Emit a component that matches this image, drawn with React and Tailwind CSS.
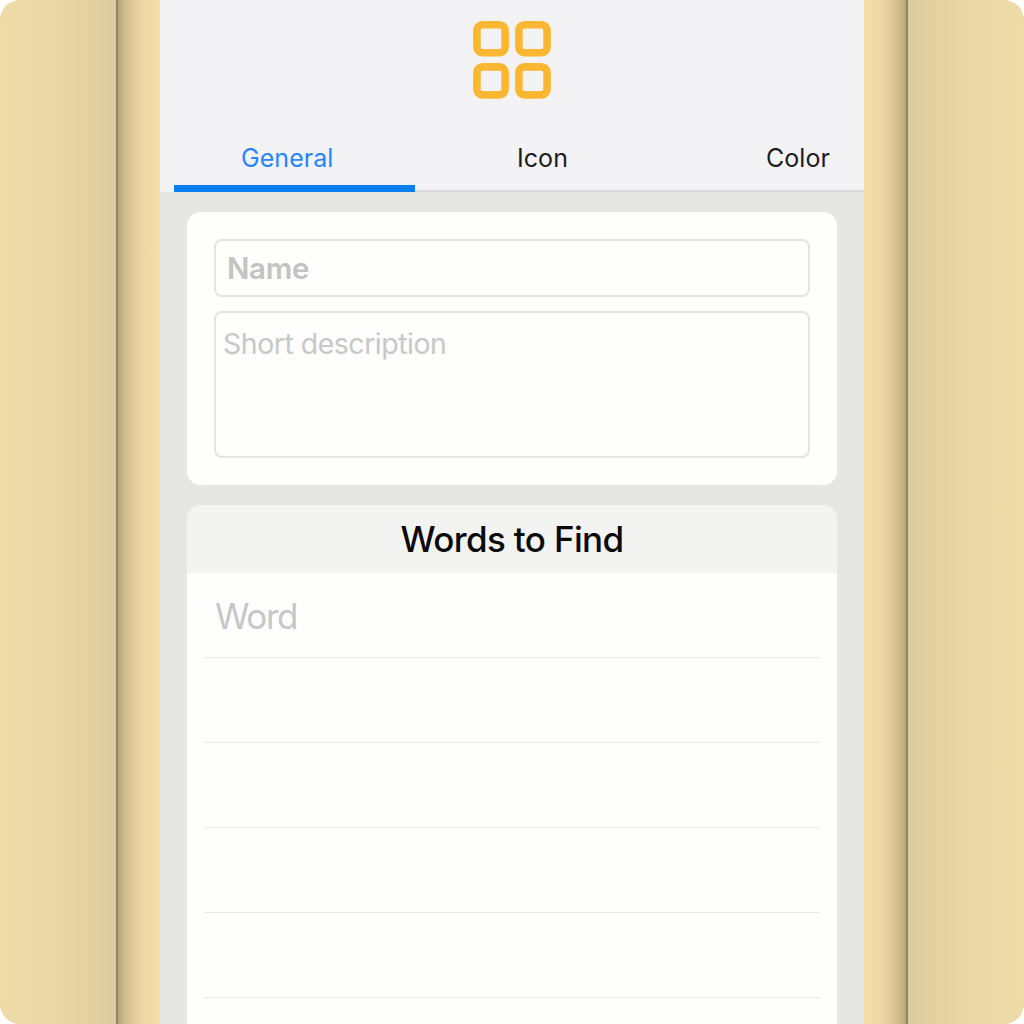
const tabs = [
  { label: "General", active: true },
  { label: "Icon", active: false },
  { label: "Color", active: false },
];

function GridIcon() {
  return (
    <svg className="h-[80px] w-[80px]" viewBox="0 0 80 80" fill="none" stroke="#fcb732" strokeWidth="7.6">
      <rect x="4.9" y="4.8" width="28.2" height="28" rx="5.6" />
      <rect x="46.9" y="4.8" width="28.2" height="28" rx="5.6" />
      <rect x="4.9" y="46.9" width="28.2" height="28" rx="5.6" />
      <rect x="46.9" y="46.9" width="28.2" height="28" rx="5.6" />
    </svg>
  );
}

function Header() {
  return (
    <header className="flex h-[192px] shrink-0 flex-col items-center bg-[#f3f3f6] pt-5">
      <GridIcon />
      <nav className="mt-[30px] flex w-full grow overflow-hidden pl-[14px] text-[25px] leading-[57px] tracking-[0.05px] text-[#1c1c1e]">
        {tabs.map(({ label, active }) => (
          <div
            key={label}
            className={
              active
                ? "h-[62px] w-[241px] shrink-0 border-b-[7px] border-[#067ff0] pl-[67px] text-[#2a84fb]"
                : "h-[62px] w-[255px] shrink-0 border-b-2 border-[#d7d7dc] pl-[102px] last:w-[194px] last:pl-[96px]"
            }
          >
            {label}
          </div>
        ))}
      </nav>
    </header>
  );
}

function DetailsCard() {
  return (
    <section className="flex h-[273px] shrink-0 flex-col gap-[14px] rounded-[14px] bg-[#fefefd] px-[27px] pt-[27px] text-[#c3c3c2]">
      <div className="h-[58px] rounded-[8px] border-2 border-[#e4e4e3] pl-[11px] text-[29.5px] leading-[54px] font-semibold tracking-[-0.3px]">
        Name
      </div>
      <div className="h-[147px] rounded-[8px] border-2 border-[#e4e4e3] pt-[11px] pl-[7px] text-[28.5px] leading-[39px] tracking-[-0.5px] text-[#c8c8c7]">
        Short description
      </div>
    </section>
  );
}

function WordsCard() {
  return (
    <section className="h-[560px] shrink-0 overflow-hidden rounded-t-[14px] bg-[#fefefd]">
      <h2 className="h-[68px] bg-[#f3f3f2] text-center text-[35px] leading-[69px] font-medium tracking-[-0.65px] text-[#0a0a0a]">
        Words to Find
      </h2>
      <ul className="px-[17px]">
        {["Word", "", "", "", "", ""].map((word, i) => (
          <li
            key={i}
            className="h-[85px] border-b border-[#e8e8e7] pl-[11px] text-[35px] leading-[86px] tracking-[-1.4px] text-[#c7c7c8]"
          >
            {word}
          </li>
        ))}
      </ul>
    </section>
  );
}

export default function App() {
  return (
    <div className="flex h-[1024px] w-[1024px] overflow-hidden rounded-[20px] font-['Inter',sans-serif]">
      <div className="w-[116px] bg-[linear-gradient(90deg,#eedba8_0%,#ecd9a7_40%,#e5d0a1_75%,#dacb9e_100%)]" />
      <div className="w-[2px] bg-[#918563]" />
      <div className="w-[42px] bg-[linear-gradient(90deg,#b6a57c_0%,#cfbb8c_18%,#e3cd9b_40%,#f0d9a5_63%,#f6dfab_100%)]" />
      <main className="flex w-[704px] flex-col bg-[#e6e6e5]">
        <Header />
        <div className="flex flex-col gap-5 pt-5 pr-[27px] pl-[27px]">
          <DetailsCard />
          <WordsCard />
        </div>
      </main>
      <div className="w-[42px] bg-[linear-gradient(270deg,#b6a57c_0%,#cfbb8c_18%,#e3cd9b_40%,#f0d9a5_63%,#f6dfab_100%)]" />
      <div className="w-[2px] bg-[#918563]" />
      <div className="w-[116px] bg-[linear-gradient(270deg,#eedba8_0%,#ecd9a7_40%,#e5d0a1_75%,#dacb9e_100%)]" />
    </div>
  );
}
